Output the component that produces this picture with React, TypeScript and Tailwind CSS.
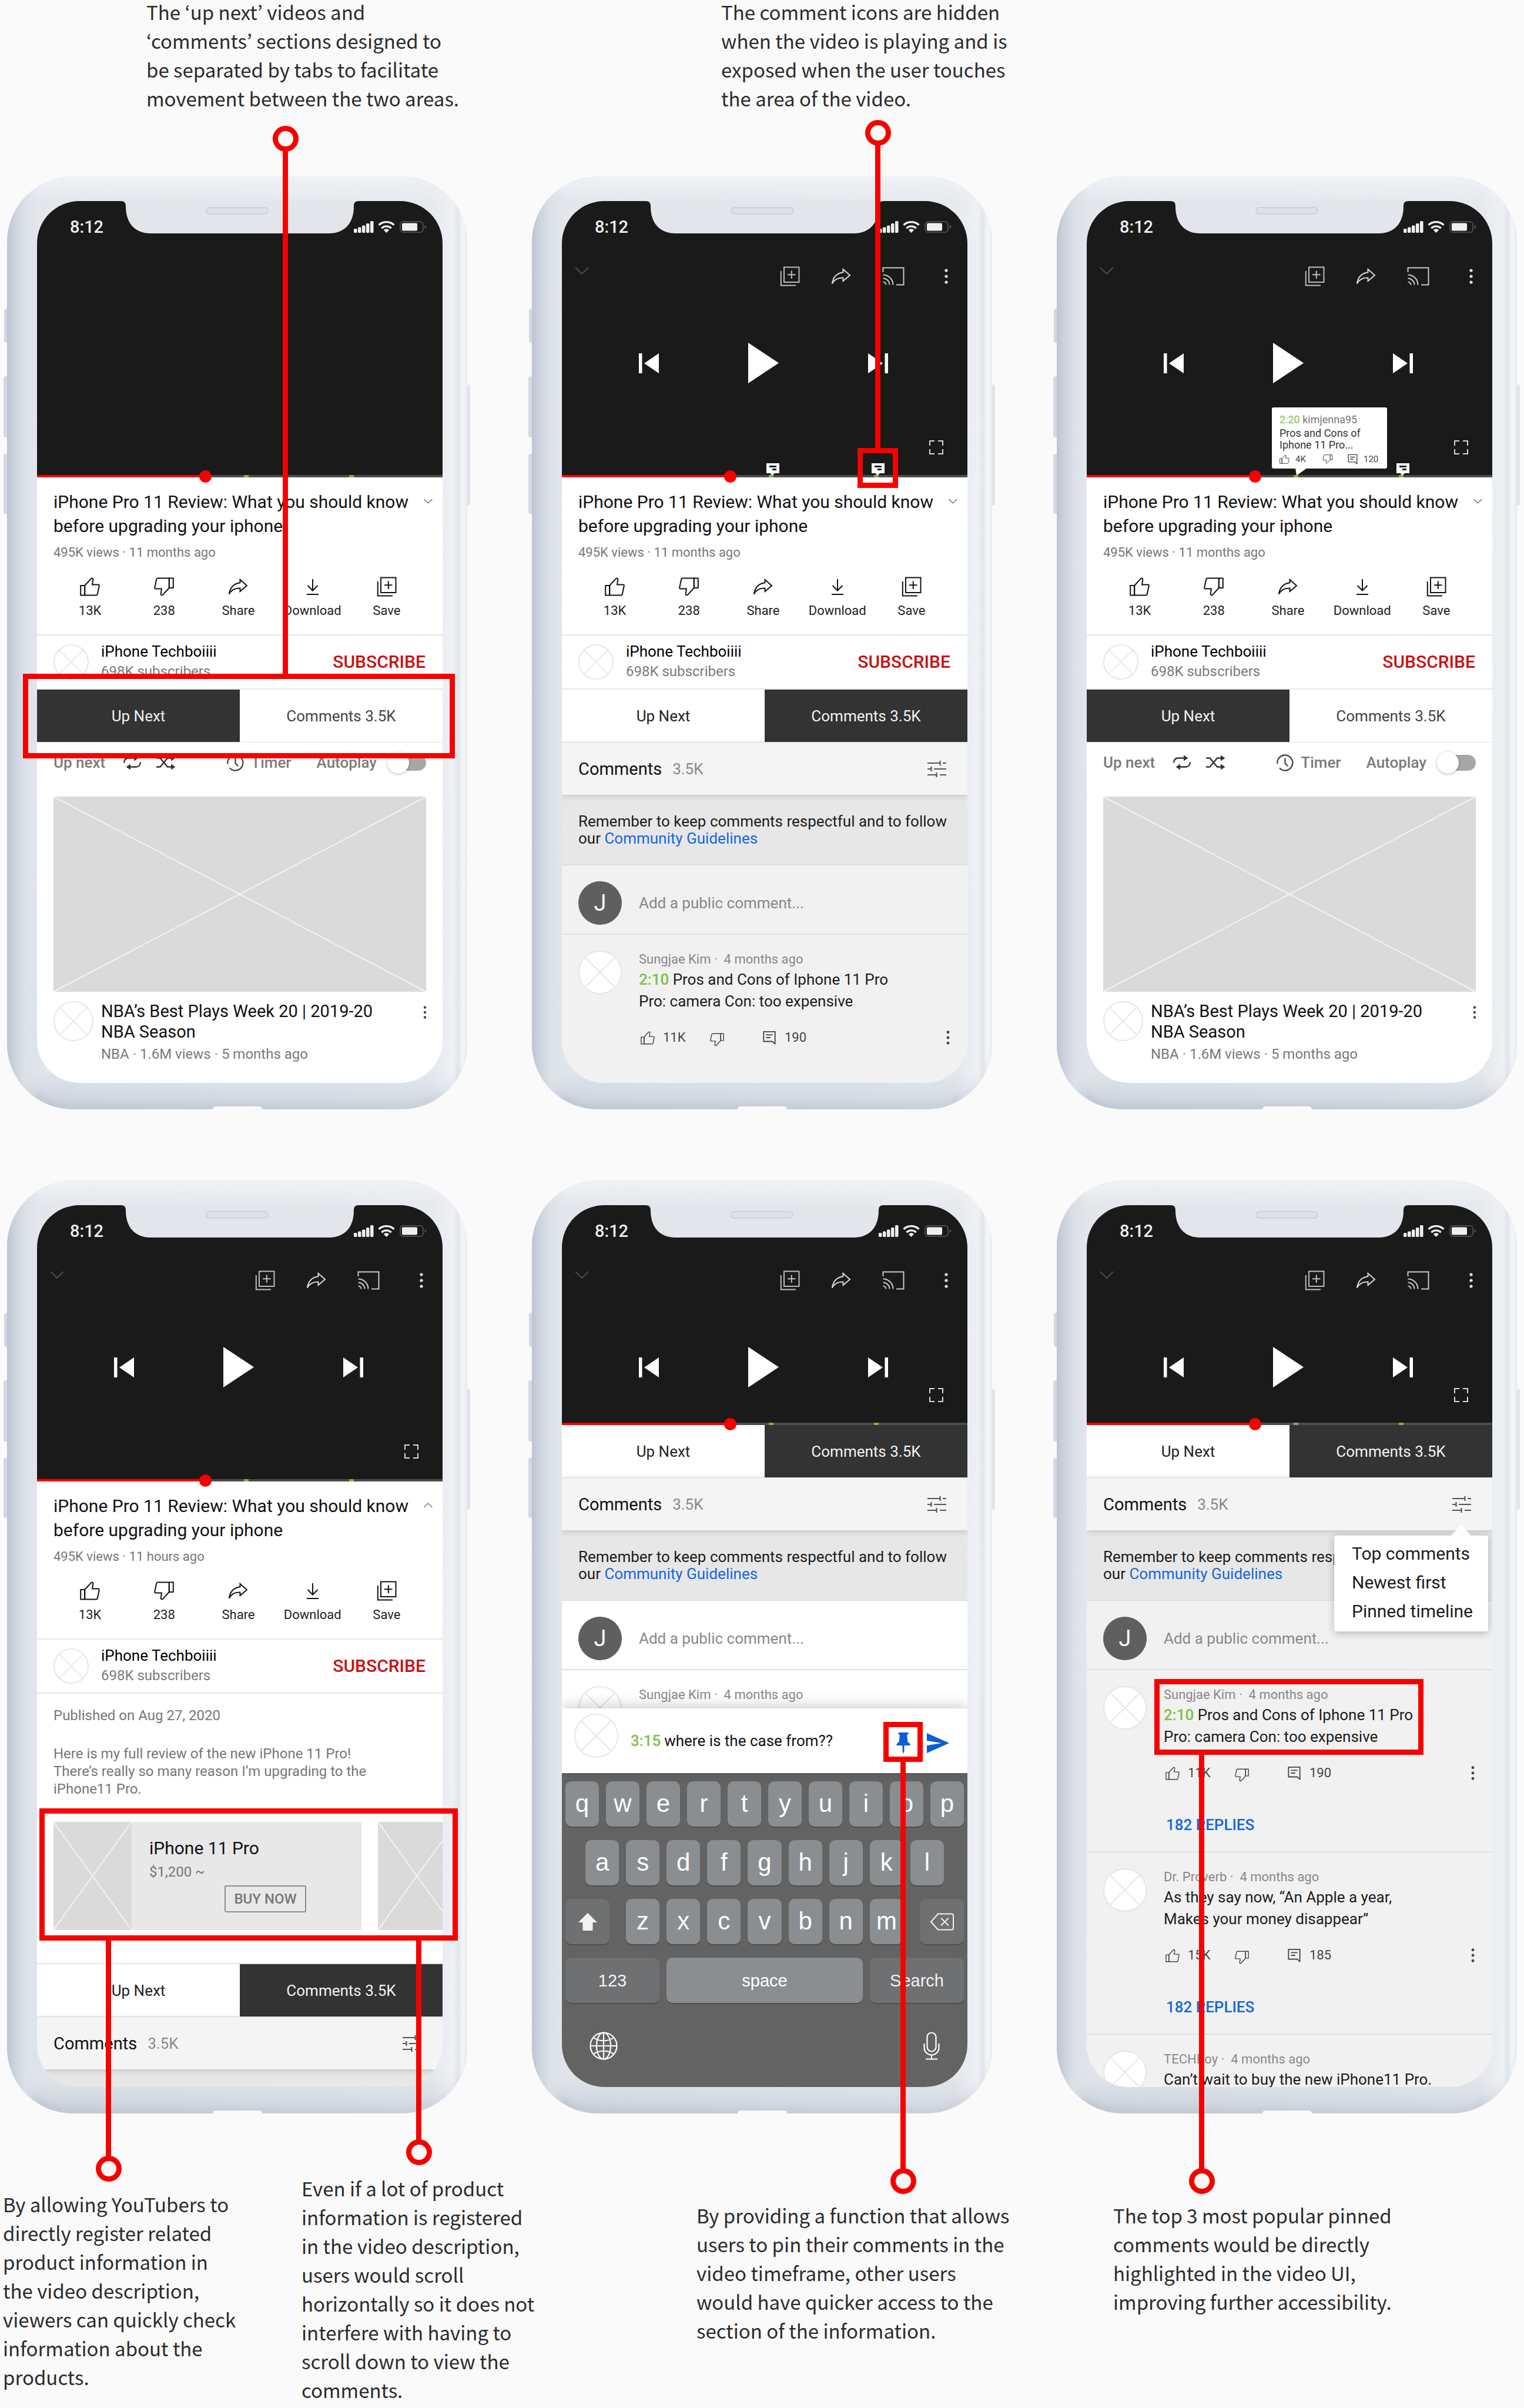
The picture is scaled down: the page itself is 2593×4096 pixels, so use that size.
import React from "react";

/* ---------------------------------- icons --------------------------------- */

type IconProps = { className?: string };

function ThumbUp({ className = "" }: IconProps) {
  return (
    <svg viewBox="0 0 34 32" fill="none" stroke="currentColor" strokeWidth="2" strokeLinejoin="round" className={className} aria-hidden="true">
      <path d="M1.2 14h7v16.6h-7z" />
      <path d="M8.2 14 18.6 2.6c1.6-1.8 4-1 3.7 1.5L21 12.6h10.4c1 0 1.6.8 1.4 1.8l-3 14.4c-.2 1-1 1.8-2.2 1.8H8.2z" />
    </svg>
  );
}

function ThumbDown({ className = "" }: IconProps) {
  return (
    <svg viewBox="0 0 34 32" fill="none" stroke="currentColor" strokeWidth="2" strokeLinejoin="round" className={className} aria-hidden="true">
      <path d="M25.8 1.4h7V18h-7z" />
      <path d="M25.8 18 15.4 29.4c-1.6 1.8-4 1-3.7-1.5l1.3-8.5H2.6c-1 0-1.6-.8-1.4-1.8l3-14.4c.2-1 1-1.8 2.2-1.8h19.4z" />
    </svg>
  );
}

function ShareArrow({ className = "" }: IconProps) {
  return (
    <svg viewBox="0 0 34 32" fill="none" stroke="currentColor" strokeWidth="2" strokeLinejoin="miter" className={className} aria-hidden="true">
      <path d="M20.5 4 32 14.2 20.5 24v-5.4C11.6 18.2 5.6 21.4 1.8 28.6 3.4 17.6 9.8 10.6 20.5 9.2z" />
    </svg>
  );
}

function DownloadIcon({ className = "" }: IconProps) {
  return (
    <svg viewBox="0 0 34 32" fill="none" stroke="currentColor" strokeWidth="2" className={className} aria-hidden="true">
      <path d="M17 3v19M8.5 14l8.5 8.5L25.5 14M7 29h20" />
    </svg>
  );
}

function SaveIcon({ className = "" }: IconProps) {
  return (
    <svg viewBox="0 0 34 34" fill="none" stroke="currentColor" strokeWidth="2" className={className} aria-hidden="true">
      <path d="M7 1.5h25.500V27H7zM19.800 7.500v13.500M13 14.200h13.500M1.800 8v24.500H27" />
    </svg>
  );
}

function CastIcon({ className = "" }: IconProps) {
  return (
    <svg viewBox="0 0 38 32" fill="none" stroke="currentColor" strokeWidth="2" className={className} aria-hidden="true">
      <path d="M1.5 9V1.5h35v29H24M1.5 13.5a17 17 0 0 1 17 17M1.5 19.500a11 11 0 0 1 11 11M1.500 25.500a5 5 0 0 1 5 5" />
    </svg>
  );
}

function Kebab({ className = "" }: IconProps) {
  return (
    <svg viewBox="0 0 6 26" fill="currentColor" className={className} aria-hidden="true">
      <circle cx="3" cy="3" r="2.6" />
      <circle cx="3" cy="13" r="2.6" />
      <circle cx="3" cy="23" r="2.6" />
    </svg>
  );
}

function Chevron({ className = "" }: IconProps) {
  return (
    <svg viewBox="0 0 24 13" fill="none" stroke="currentColor" strokeWidth="2" className={className} aria-hidden="true">
      <path d="m1 1 11 11L23 1" />
    </svg>
  );
}

function SkipPrev({ className = "" }: IconProps) {
  return (
    <svg viewBox="0 0 34 34" fill="currentColor" className={className} aria-hidden="true">
      <path d="M0 0h5.5v34H0zM34 0v34L9 17z" />
    </svg>
  );
}

function SkipNext({ className = "" }: IconProps) {
  return (
    <svg viewBox="0 0 34 34" fill="currentColor" className={className} aria-hidden="true">
      <path d="M28.5 0H34v34h-5.5zM0 0v34l25-17z" />
    </svg>
  );
}

function PlayIcon({ className = "" }: IconProps) {
  return (
    <svg viewBox="0 0 52 69" fill="currentColor" className={className} aria-hidden="true">
      <path d="M0 0v69l52-34.5z" />
    </svg>
  );
}

function FullscreenIcon({ className = "" }: IconProps) {
  return (
    <svg viewBox="0 0 24 24" fill="none" stroke="currentColor" strokeWidth="2" className={className} aria-hidden="true">
      <path d="M1 9V1h8M15 1h8v8M23 15v8h-8M9 23H1v-8" />
    </svg>
  );
}

function CommentIcon({ className = "" }: IconProps) {
  return (
    <svg viewBox="0 0 24 26" fill="none" stroke="currentColor" strokeWidth="2" strokeLinejoin="round" className={className} aria-hidden="true">
      <path d="M1.5 2h21v22.5L17.5 20h-16zM6 8h12M6 13h8" />
    </svg>
  );
}

function TuneIcon({ className = "" }: IconProps) {
  return (
    <svg viewBox="0 0 34 30" fill="none" stroke="currentColor" strokeWidth="2.2" className={className} aria-hidden="true">
      <path d="M1 5h21M27 5h6M22.5 1v8M1 15h6M12 15h21M7.5 11v8M1 25h15M22 25h11M16.5 21v8" />
    </svg>
  );
}

function RepeatIcon({ className = "" }: IconProps) {
  return (
    <svg viewBox="0 0 32 26" fill="none" stroke="currentColor" strokeWidth="2.4" className={className} aria-hidden="true">
      <path d="M2 13.5C2.5 7.5 5 5.5 9.5 5.5H20M30 12.5c-.5 6-3 8-7.5 8H12" />
      <path d="m19 .5 7.5 5-7.5 5zM13 15.500l-7.500 5 7.500 5z" fill="currentColor" stroke="none" />
    </svg>
  );
}

function ShuffleIcon({ className = "" }: IconProps) {
  return (
    <svg viewBox="0 0 34 26" fill="none" stroke="currentColor" strokeWidth="2.4" className={className} aria-hidden="true">
      <path d="M1 5.5h6.5L20 20.5h7M1 20.5h6.5L20 5.5h7" />
      <path d="m26 .5 7.5 5-7.5 5zM26 15.5l7.5 5-7.5 5z" fill="currentColor" stroke="none" />
    </svg>
  );
}

function TimerIcon({ className = "" }: IconProps) {
  return (
    <svg viewBox="0 0 30 30" fill="none" stroke="currentColor" strokeWidth="2.4" className={className} aria-hidden="true">
      <path d="M1.5 17A13.5 13.5 0 1 1 15 28.5c-4 0-7.5-1.8-9.8-4.5M15 7v9l5 5" />
    </svg>
  );
}

function PinIcon({ className = "" }: IconProps) {
  return (
    <svg viewBox="0 0 24 36" fill="currentColor" className={className} aria-hidden="true">
      <path d="M3.5 0h17v3.500h-2.500l1.500 13c2.500 1 4 2.600 4.300 5.500H13.500v10L12 36l-1.500-4V22H.2c.3-2.900 1.800-4.500 4.300-5.500l1.500-13H3.500z" />
    </svg>
  );
}

function SendIcon({ className = "" }: IconProps) {
  return (
    <svg viewBox="0 0 38 34" fill="currentColor" className={className} aria-hidden="true">
      <path d="M0 0 38 17 0 34V21l25-4L0 13z" />
    </svg>
  );
}

function ShiftIcon({ className = "" }: IconProps) {
  return (
    <svg viewBox="0 0 32 30" fill="currentColor" className={className} aria-hidden="true">
      <path d="M16 0 32 16h-7.500v13a1 1 0 0 1-1 1h-15a1 1 0 0 1-1-1V16H0z" />
    </svg>
  );
}

function BackspaceIcon({ className = "" }: IconProps) {
  return (
    <svg viewBox="0 0 40 30" fill="none" stroke="currentColor" strokeWidth="2" strokeLinejoin="round" className={className} aria-hidden="true">
      <path d="M13 1.5h23a3 3 0 0 1 3 3v21a3 3 0 0 1-3 3H13L1 15zM18 8.5l13 13M31 8.5l-13 13" />
    </svg>
  );
}

function GlobeIcon({ className = "" }: IconProps) {
  return (
    <svg viewBox="0 0 48 48" fill="none" stroke="currentColor" strokeWidth="2.2" className={className} aria-hidden="true">
      <circle cx="24" cy="24" r="22.5" />
      <ellipse cx="24" cy="24" rx="12" ry="22.5" />
      <path d="M24 1.5v45M1.5 24h45M7 10c9 7 25 7 34 0M7 38c9-7 25-7 34 0" />
    </svg>
  );
}

function MicIcon({ className = "" }: IconProps) {
  return (
    <svg viewBox="0 0 28 48" fill="none" stroke="currentColor" strokeWidth="2.2" className={className} aria-hidden="true">
      <rect x="6.5" y="1.5" width="15" height="32" rx="7.5" />
      <path d="M1.5 20v7a12.5 12.5 0 0 0 25 0v-7M14 39.5V46M4 46.5h20" />
    </svg>
  );
}

function StatusIcons() {
  return (
    <svg viewBox="0 0 125 20" className="h-5 w-[125px]" aria-hidden="true">
      <g fill="#efefef">
        <rect x="0" y="13" width="5.500" height="7" rx="1.500" />
        <rect x="7" y="10.500" width="5.500" height="9.500" rx="1.500" />
        <rect x="14" y="7.500" width="5.500" height="12.500" rx="1.500" />
        <rect x="21" y="4" width="5.500" height="16" rx="1.500" />
        <rect x="28" y="0" width="5.500" height="20" rx="1.500" />
        <path d="M55.500 20 50.800 15.200a6.800 6.800 0 0 1 9.400 0z" />
        <rect x="82" y="3.500" width="26" height="13" rx="2" />
      </g>
      <g fill="none" stroke="#efefef" strokeWidth="3.400">
        <path d="M47.300 12.200a11.800 11.800 0 0 1 16.400 0" />
        <path d="M42.500 6.800a19 19 0 0 1 26 0" />
      </g>
      <rect x="79" y="1" width="39" height="18" rx="5" fill="none" stroke="#4a4a4a" strokeWidth="2" />
      <path d="M120.500 7c2 .6 3 1.600 3 3s-1 2.400-3 3z" fill="#4a4a4a" />
    </svg>
  );
}

/* ------------------------------ device frame ------------------------------ */

function Notch() {
  return (
    <div className="absolute top-0 left-1/2 z-10 h-[56px] w-[406px] -translate-x-1/2">
      <svg viewBox="0 0 406 56" preserveAspectRatio="none" className="h-full w-full" aria-hidden="true">
        <path d="M0 0c7 0 9 3 9 9 0 30 17 46 42 46h304c25 0 42-16 42-46 0-6 2-9 9-9V-2H0z" fill="#e2e6eb" />
      </svg>
      <div className="absolute top-[10px] left-[145px] h-[13px] w-[107px] rounded-full border-2 border-[#ccd2db] bg-[#dde1e7]" />
    </div>
  );
}

function Phone({ children, overlay, label }: { children: React.ReactNode; overlay?: React.ReactNode; label: string }) {
  return (
    <section aria-label={label} className="relative">
      <div className="absolute top-[225px] -left-[5px] h-[58px] w-2 rounded-l bg-[#d3d9e2]" />
      <div className="absolute top-[340px] -left-[6px] h-[104px] w-2 rounded-l bg-[#d3d9e2]" />
      <div className="absolute top-[472px] -left-[6px] h-[102px] w-2 rounded-l bg-[#d3d9e2]" />
      <div className="absolute top-[354px] -right-[5px] h-[206px] w-2 rounded-r bg-[#e0e5eb]" />
      <div className="relative rounded-[112px] bg-[linear-gradient(180deg,#eef1f4_0px,#e3e7ec_44px,#e4e8ed_50%,#e0e5eb_96%,#c9d0da_100%)] shadow-[inset_0_-8px_12px_#bfc7d3,inset_0_3px_6px_#f3f5f7,inset_-3px_0_4px_#dfe4ea]">
        <div className="rounded-[112px] bg-[linear-gradient(90deg,#bcc4d2_0px,#cbd2dd_12px,#dce1e8_30px,rgba(226,230,236,0)_56px,rgba(240,243,245,0.2)_92%,rgba(240,243,246,0.8)_97%,rgba(225,230,235,0.8)_98%,rgba(250,251,252,0.8)_99%,rgba(250,251,252,0.5)_100%)] pt-[42px] pr-[42px] pb-[45px] pl-[51px]">
          <div className="relative flex aspect-[690/1500] flex-col overflow-hidden rounded-[72px] bg-white">
            <Notch />
            {children}
          </div>
        </div>
        <div className="absolute bottom-0 left-1/2 h-[5px] w-[84px] -translate-x-1/2 rounded-t-lg bg-[#fafafa]" />
      </div>
      {overlay}
    </section>
  );
}

/* ------------------------------ video section ----------------------------- */

function PinnedBubble() {
  return (
    <svg viewBox="0 0 22 24" className="h-6 w-[22px]" aria-hidden="true">
      <path d="M0 0h22v17h-8l-5 5-2-5H0z" fill="#fff" />
      <path d="M5 4h12v3H5zM10 9h7v3h-7z" fill="#1a1a1a" />
    </svg>
  );
}

function PinnedCard() {
  return (
    <div className="absolute bottom-[15px] left-[315px] z-10 w-[196px] rounded-[3px] bg-white px-[13px] pt-2 pb-[6px]">
      <p className="text-lg leading-[26px] whitespace-nowrap text-[#777]">
        <span className="text-[#7cc142]">2:20</span> kimjenna95
      </p>
      <p className="text-lg leading-5 text-[#333]">
        Pros and Cons of
        <br />
        Iphone 11 Pro...
      </p>
      <div className="mt-1 flex h-5 items-center text-[15px] leading-5 text-[#444]">
        <ThumbUp className="h-4 w-[17px]" />
        <span className="ml-[10px] w-[46px]">4K</span>
        <ThumbDown className="h-4 w-[18px]" />
        <CommentIcon className="ml-[25px] h-[18px] w-[17px]" />
        <span className="ml-[10px]">120</span>
      </div>
      <svg viewBox="0 0 20 13" className="absolute -bottom-3 left-[40px] h-[13px] w-5" aria-hidden="true">
        <path d="M0 0h20L2 13z" fill="#fff" />
      </svg>
    </div>
  );
}

function Video({
  compact = false,
  controls = true,
  pins = "none",
}: {
  compact?: boolean;
  controls?: boolean;
  pins?: "none" | "bubbles" | "card";
}) {
  return (
    <div className={`relative flex shrink-0 flex-col bg-[#1a1a1a] text-white ${compact ? "h-[374px]" : "h-[470px]"}`}>
      <div className="flex h-[88px] items-center justify-between pr-[26px] pl-[56px]">
        <span className="text-[29px] leading-8 font-medium text-[#efefef]">8:12</span>
        <StatusIcons />
      </div>
      {controls && (
        <>
          <div className="mt-[22px] flex h-9 items-center pr-[33px] pl-[22px]">
            <button aria-label="Minimise" className="-mt-5 text-[#4d4d4d]">
              <Chevron className="h-[13px] w-6" />
            </button>
            <button aria-label="Save" className="ml-auto text-[#bdbdbd]">
              <SaveIcon className="h-[34px] w-[34px]" />
            </button>
            <button aria-label="Share" className="ml-[53px] text-[#d8d8d8]">
              <ShareArrow className="h-8 w-[34px]" />
            </button>
            <button aria-label="Cast" className="ml-[53px] text-[#c8c8c8]">
              <CastIcon className="h-8 w-[38px]" />
            </button>
            <button aria-label="More" className="ml-[68px] text-[#e2e2e2]">
              <Kebab className="h-[26px] w-[6px]" />
            </button>
          </div>
          <div className="mt-[95px] flex items-center justify-between pr-[135px] pl-[131px]">
            <button aria-label="Previous">
              <SkipPrev className="h-[34px] w-[34px]" />
            </button>
            <button aria-label="Play">
              <PlayIcon className="h-[69px] w-[52px]" />
            </button>
            <button aria-label="Next">
              <SkipNext className="h-[34px] w-[34px]" />
            </button>
          </div>
          <button aria-label="Full screen" className="mt-auto mr-[41px] mb-[39px] self-end text-[#d8d8d8]">
            <FullscreenIcon className="h-6 w-6" />
          </button>
        </>
      )}
      <div className="absolute inset-x-0 bottom-0 z-20 h-1 bg-[#4c4c4c]">
        <div className="absolute top-0 left-[51%] h-1 w-2 bg-[#76b83f]" />
        <div className="absolute top-0 left-[77%] h-1 w-2 bg-[#76b83f]" />
        <div className="h-full w-[42%] bg-[#f60000]" />
        <div className="absolute -top-2 left-[40%] h-[21px] w-[21px] rounded-full bg-[#f60000]" />
        <input type="range" aria-label="Seek" defaultValue={42} className="absolute -top-2 left-0 h-5 w-full opacity-0" />
      </div>
      {pins === "bubbles" && (
        <div className="absolute bottom-0 left-[348px]">
          <PinnedBubble />
        </div>
      )}
      {pins === "card" && <PinnedCard />}
      {pins !== "none" && (
        <div className="absolute bottom-0 left-[527px]">
          <PinnedBubble />
        </div>
      )}
    </div>
  );
}

/* ------------------------------ shared blocks ----------------------------- */

function Placeholder({ className = "" }: { className?: string }) {
  return (
    <div className={`shrink-0 overflow-hidden rounded-full border-2 border-[#e6e6e6] bg-white ${className}`}>
      <svg viewBox="0 0 100 100" className="h-full w-full" fill="none" stroke="#e4e4e4" strokeWidth="2.5" aria-hidden="true">
        <path d="m14 14 72 72M86 14 14 86" />
      </svg>
    </div>
  );
}

function CrossBox({ className = "" }: { className?: string }) {
  return (
    <div className={`shrink-0 bg-[#dadada] ${className}`}>
      <svg viewBox="0 0 100 100" preserveAspectRatio="none" className="h-full w-full" fill="none" stroke="#f3f3f3" strokeWidth="2" aria-hidden="true">
        <path d="m0 0 100 100M100 0 0 100" vectorEffect="non-scaling-stroke" />
      </svg>
    </div>
  );
}

const actions = [
  { label: "13K", icon: <ThumbUp className="h-8 w-[34px]" /> },
  { label: "238", icon: <ThumbDown className="h-8 w-[34px]" /> },
  { label: "Share", icon: <ShareArrow className="h-8 w-[34px]" /> },
  { label: "Download", icon: <DownloadIcon className="h-8 w-[34px]" /> },
  { label: "Save", icon: <SaveIcon className="h-[34px] w-[34px]" /> },
];

function Details({ age, open = false }: { age: string; open?: boolean }) {
  return (
    <div className="shrink-0 border-b-2 border-[#e6e6e6] bg-white pt-[21px] pb-[27px]">
      <div className="flex items-start justify-between pr-[17px] pl-7">
        <h2 className="text-[30px] leading-[41px] text-[#111]">
          iPhone Pro 11 Review: What you should know
          <br />
          before upgrading your iphone
        </h2>
        <button aria-label={open ? "Collapse" : "Expand"} className="mt-[15px] shrink-0 text-[#666]">
          <Chevron className={open ? "h-[9px] w-[15px] rotate-180" : "h-[9px] w-[15px]"} />
        </button>
      </div>
      <p className="mt-3 pl-7 text-[22px] leading-[26px] text-[#777]">495K views · {age} ago</p>
      <div className="mt-7 grid grid-cols-5 pr-8 pl-[27px]">
        {actions.map((a) => (
          <button key={a.label} className="flex flex-col items-center text-[#111]">
            <span className="flex h-[34px] items-center">{a.icon}</span>
            <span className="mt-[11px] text-[22px] leading-[26px] text-[#222]">{a.label}</span>
          </button>
        ))}
      </div>
    </div>
  );
}

function Channel() {
  return (
    <div className="flex h-[92px] shrink-0 items-center border-b-2 border-[#e6e6e6] bg-white pr-[29px] pl-7">
      <Placeholder className="h-[60px] w-[60px]" />
      <div className="ml-[21px] pb-[2px]">
        <p className="text-[26px] leading-[34px] text-black">iPhone Techboiiii</p>
        <p className="text-2xl leading-[34px] text-[#7a7a7a]">698K subscribers</p>
      </div>
      <button className="ml-auto text-[30px] leading-9 font-medium text-[#cc0f0f]">SUBSCRIBE</button>
    </div>
  );
}

function Tabs({ active }: { active: "next" | "comments" }) {
  const on = "bg-[#333] text-[#f2f2f2]";
  return (
    <div role="tablist" className="grid h-[90px] shrink-0 grid-cols-2 border-b border-[#e2e2e2] bg-white text-[26px] leading-8">
      <button role="tab" aria-selected={active === "next"} className={active === "next" ? on : "text-[#222]"}>
        Up Next
      </button>
      <button role="tab" aria-selected={active === "comments"} className={active === "comments" ? on : "text-[#444]"}>
        Comments 3.5K
      </button>
    </div>
  );
}

function UpNext() {
  return (
    <>
      <div className="flex h-[68px] shrink-0 items-center pr-7 pl-7 text-[26px] leading-8 font-medium text-[#7b7b7b]">
        <span>Up next</span>
        <button aria-label="Repeat" className="ml-[30px] text-[#333]">
          <RepeatIcon className="h-[26px] w-8" />
        </button>
        <button aria-label="Shuffle" className="ml-6 text-[#333]">
          <ShuffleIcon className="h-[26px] w-[34px]" />
        </button>
        <button className="ml-auto flex items-center gap-3">
          <TimerIcon className="h-[29px] w-[29px] text-[#444]" />
          Timer
        </button>
        <label className="ml-[43px] flex items-center gap-[18px]">
          Autoplay
          <span className="relative block h-[37px] w-[66px]">
            <input type="checkbox" role="switch" className="absolute inset-0 z-10 h-full w-full opacity-0" />
            <span className="absolute top-[5px] right-0 h-[27px] w-[60px] rounded-full bg-[#a6a6a6]" />
            <span className="absolute top-0 left-0 h-[37px] w-[37px] rounded-full bg-white shadow-[0_1px_4px_rgba(0,0,0,0.3)]" />
          </span>
        </label>
      </div>
      <CrossBox className="mx-7 mt-6 h-[332px]" />
      <div className="flex items-start pt-4 pr-[27px] pl-7">
        <Placeholder className="h-[68px] w-[68px]" />
        <div className="ml-[13px]">
          <h3 className="text-[29px] leading-[35px] text-[#111]">
            NBA’s Best Plays Week 20 | 2019-20
            <br />
            NBA Season
          </h3>
          <p className="mt-[5px] text-2xl leading-[30px] text-[#7a7a7a]">NBA · 1.6M views · 5 months ago</p>
        </div>
        <button aria-label="More" className="mt-2 ml-auto text-[#444]">
          <Kebab className="h-[22px] w-[6px]" />
        </button>
      </div>
    </>
  );
}

function CommentsHeader() {
  return (
    <div className="relative z-10 flex h-[89px] shrink-0 items-center bg-[#f4f4f4] pr-[35px] pl-7 shadow-[0_2px_10px_rgba(0,0,0,0.16)]">
      <h3 className="text-[29px] leading-9 text-[#111]">Comments</h3>
      <span className="ml-[18px] text-[26px] leading-9 text-[#888]">3.5K</span>
      <button aria-label="Sort comments" className="ml-auto text-[#555]">
        <TuneIcon className="h-[30px] w-[34px]" />
      </button>
    </div>
  );
}

function Reminder() {
  return (
    <p className="shrink-0 border-b-2 border-[#dfdfdf] bg-[#e7e7e7] pt-[31px] pb-[29px] pl-7 text-[26px] leading-[29px] whitespace-nowrap text-[#1c1c1c]">
      Remember to keep comments respectful and to follow
      <br />
      our{" "}
      <a href="#guidelines" className="text-[#1467de]">
        Community Guidelines
      </a>
    </p>
  );
}

function AddComment({ white = false }: { white?: boolean }) {
  return (
    <div className={`flex shrink-0 items-center border-b-2 border-[#e0e0e0] pt-[27px] pb-[15px] pl-7 ${white ? "bg-white" : "bg-[#f1f1f1]"}`}>
      <div className="flex h-[74px] w-[74px] shrink-0 items-center justify-center rounded-full bg-[#5f5f5f] text-[38px] leading-10 text-white">J</div>
      <input aria-label="Add a public comment" placeholder="Add a public comment..." className="ml-[29px] w-[420px] bg-transparent text-[26px] leading-8 outline-none placeholder:text-[#888]" />
    </div>
  );
}

type CommentData = {
  author: string;
  time?: string;
  lines: string[];
  likes: string;
  replies: string;
  thread?: string;
};

const topComment: CommentData = {
  author: "Sungjae Kim",
  time: "2:10",
  lines: ["Pros and Cons of Iphone 11 Pro", "Pro: camera Con: too expensive"],
  likes: "11K",
  replies: "190",
};

function Comment({ data }: { data: CommentData }) {
  return (
    <article className={`flex shrink-0 pt-[27px] pr-[30px] pb-[30px] pl-7 ${data.thread ? "border-b-2 border-[#e0e0e0]" : ""}`}>
      <Placeholder className="h-[74px] w-[74px]" />
      <div className="ml-[29px] flex-1 pt-[2px]">
        <p className="text-[22px] leading-[26px] text-[#888]">{data.author} ·&nbsp; 4 months ago</p>
        <p className="mt-[3px] text-[26px] leading-[37px] whitespace-nowrap text-[#1c1c1c]">
          {data.time && <span className="font-medium text-[#7cc142]">{data.time} </span>}
          {data.lines[0]}
          <br />
          {data.lines[1]}
        </p>
        <div className="mt-[30px] flex h-[26px] items-center pl-[3px] text-[22px] leading-[26px] text-[#444]">
          <button className="flex w-[118px] items-center gap-[14px]">
            <ThumbUp className="h-[23px] w-6" />
            {data.likes}
          </button>
          <button aria-label="Dislike" className="w-[89px] pt-[6px]">
            <ThumbDown className="h-[23px] w-6" />
          </button>
          <button className="flex items-center gap-[14px]">
            <CommentIcon className="h-6 w-6" />
            {data.replies}
          </button>
          <button aria-label="More" className="ml-auto">
            <Kebab className="h-6 w-[6px]" />
          </button>
        </div>
        {data.thread && (
          <button className="mt-[60px] block pl-1 text-[26px] leading-[30px] font-medium text-[#1467de]">{data.thread}</button>
        )}
      </div>
    </article>
  );
}

/* ------------------------------ row 2 content ----------------------------- */

function Description() {
  return (
    <div className="shrink-0 border-b-2 border-[#e6e6e6] bg-white pt-[22px] pb-[56px] text-2xl leading-[30px] text-[#777]">
      <p className="pl-7">Published on Aug 27, 2020</p>
      <p className="mt-[35px] pl-7">
        Here is my full review of the new iPhone 11 Pro!
        <br />
        There’s really so many reason I’m upgrading to the
        <br />
        iPhone11 Pro.
      </p>
      <div className="mt-[41px] flex gap-7 overflow-hidden pl-7">
        <div className="flex h-[184px] w-[524px] shrink-0 bg-[#e8e8e8]">
          <CrossBox className="w-[133px]" />
          <div className="flex-1 pt-[26px] pl-[30px]">
            <h3 className="text-[30px] leading-[38px] text-[#111]">iPhone 11 Pro</h3>
            <p className="mt-[6px]">$1,200 ~</p>
            <button className="mt-2 ml-[128px] h-[46px] w-[139px] rounded-[3px] border-2 border-[#8e8e8e] font-medium text-[#777]">BUY NOW</button>
          </div>
        </div>
        <CrossBox className="h-[184px] w-[133px]" />
      </div>
    </div>
  );
}

const keyClass =
  "flex h-[77px] items-center justify-center rounded-[10px] bg-[#8a8e90] font-['Liberation_Sans',sans-serif] text-[42px] leading-[50px] text-white shadow-[0_2px_0_#4f4f4f]";
const darkKey =
  "flex h-[77px] items-center justify-center rounded-[10px] bg-[#6f7072] font-['Liberation_Sans',sans-serif] text-[29px] leading-9 text-[#f2f2f2] shadow-[0_2px_0_#505050]";

function Keys({ letters }: { letters: string }) {
  return (
    <div className="flex flex-1 gap-3">
      {letters.split("").map((l) => (
        <button key={l} className={`${keyClass} flex-1 pb-[2px]`}>
          {l}
        </button>
      ))}
    </div>
  );
}

function Keyboard() {
  return (
    <div className="flex flex-1 flex-col gap-[23px] bg-[#636363] pt-[14px]">
      <div className="flex px-[6px]">
        <Keys letters="qwertyuiop" />
      </div>
      <div className="flex px-[40px]">
        <Keys letters="asdfghjkl" />
      </div>
      <div className="flex gap-[28px] px-[6px]">
        <button aria-label="Shift" className={`${darkKey} w-[75px]`}>
          <ShiftIcon className="h-[30px] w-8" />
        </button>
        <Keys letters="zxcvbnm" />
        <button aria-label="Backspace" className={`${darkKey} w-[75px]`}>
          <BackspaceIcon className="h-[30px] w-10" />
        </button>
      </div>
      <div className="flex gap-3 px-[6px]">
        <button className={`${darkKey} w-[160px]`}>123</button>
        <button className={`${keyClass} flex-1`}>
          <span className="text-[29px] leading-9">space</span>
        </button>
        <button className={`${darkKey} w-[160px]`}>Search</button>
      </div>
      <div className="mt-[26px] flex items-center justify-between px-[47px] text-white">
        <button aria-label="Change keyboard">
          <GlobeIcon className="h-12 w-12" />
        </button>
        <button aria-label="Dictate">
          <MicIcon className="h-12 w-7" />
        </button>
      </div>
    </div>
  );
}

function Composer() {
  return (
    <div className="relative z-10 flex h-[110px] shrink-0 items-center bg-white pr-[31px] pl-[21px] shadow-[0_-4px_22px_rgba(0,0,0,0.2)]">
      <Placeholder className="mt-[9px] h-[75px] w-[75px] self-start" />
      <label className="ml-[21px] flex flex-1 items-center text-[26px] leading-8 text-[#111]">
        <span className="mr-[6px] font-medium text-[#7cc142]">3:15</span>
        <input aria-label="Your comment" defaultValue="where is the case from??" className="min-w-0 flex-1 bg-transparent outline-none" />
      </label>
      <button aria-label="Pin to timeline" className="mt-[7px] text-[#0b5cda]">
        <PinIcon className="h-9 w-6" />
      </button>
      <button aria-label="Send" className="mt-[7px] ml-[28px] text-[#0b5cda]">
        <SendIcon className="h-[34px] w-[38px]" />
      </button>
    </div>
  );
}

function SortMenu() {
  return (
    <div role="menu" className="absolute top-[562px] right-[7px] z-20 flex w-[262px] flex-col items-start rounded bg-white pt-[6px] pb-[10px] pl-[30px] text-[30px] leading-[49px] text-[#1c1c1c] shadow-[0_3px_14px_rgba(0,0,0,0.25)]">
      <svg viewBox="0 0 36 19" className="absolute -top-[18px] right-[28px] h-[19px] w-9" aria-hidden="true">
        <path d="M0 19 18 0l18 19z" fill="#fff" />
      </svg>
      <button role="menuitem">Top comments</button>
      <button role="menuitem">Newest first</button>
      <button role="menuitem">Pinned timeline</button>
    </div>
  );
}

/* ------------------------------- annotations ------------------------------ */

function Box({ className }: { className: string }) {
  return <div className={`pointer-events-none absolute z-30 border-[9px] border-[#f60000] ${className}`} />;
}

function Line({ className }: { className: string }) {
  return <div className={`pointer-events-none absolute z-30 w-[9px] bg-[#f60000] ${className}`} />;
}

function Ring({ className }: { className: string }) {
  return <div className={`pointer-events-none absolute z-30 h-11 w-11 rounded-full border-[9px] border-[#f60000] bg-[#fafafa] ${className}`} />;
}

function Caption({ lines, className = "" }: { lines: string[]; className?: string }) {
  return (
    <p className={`font-['Noto_Sans_CJK_KR','Noto_Sans_CJK_SC',sans-serif] text-[33px] leading-[49px] whitespace-nowrap text-[#2b2b2b] ${className}`}>
      {lines.map((l) => (
        <span key={l} className="block">
          {l}
        </span>
      ))}
    </p>
  );
}

export default function App() {
  return (
    <main className="min-h-[4096px] overflow-hidden bg-[#fafafa] font-['Roboto',sans-serif]">
      <div className="grid grid-cols-3 gap-x-[110px] px-3 pb-[108px]">
        <Caption
          className="-mt-1 pl-[237px]"
          lines={["The ‘up next’ videos and", "‘comments’ sections designed to", "be separated by tabs to facilitate", "movement between the two areas."]}
        />
        <Caption
          className="-mt-1 pl-[322px]"
          lines={["The comment icons are hidden", "when the video is playing and is", "exposed when the user touches", "the area of the video."]}
        />
      </div>

      <div className="grid grid-cols-3 gap-x-[110px] gap-y-[121px] px-3">
        <Phone
          label="Video playing, up next tab"
          overlay={
            <>
              <Line className="-top-[46px] left-[469px] h-[896px]" />
              <Ring className="-top-[86px] left-[452px]" />
              <Box className="top-[846px] left-[27px] h-[144px] w-[735px]" />
            </>
          }
        >
          <Video controls={false} />
          <Details age="11 months" />
          <Channel />
          <Tabs active="next" />
          <UpNext />
        </Phone>

        <Phone
          label="Video touched, comments tab"
          overlay={
            <>
              <Line className="-top-[56px] left-[584px] h-[520px]" />
              <Ring className="-top-[96px] left-[567px]" />
              <Box className="top-[462px] left-[554px] h-[68px] w-[69px]" />
            </>
          }
        >
          <Video pins="bubbles" />
          <Details age="11 months" />
          <Channel />
          <Tabs active="comments" />
          <CommentsHeader />
          <Reminder />
          <AddComment />
          <div className="flex-1 bg-[#f1f1f1]">
            <Comment data={topComment} />
          </div>
        </Phone>

        <Phone label="Pinned comment preview">
          <Video pins="card" />
          <Details age="11 months" />
          <Channel />
          <Tabs active="next" />
          <UpNext />
        </Phone>

        <Phone
          label="Expanded description"
          overlay={
            <>
              <Box className="top-[1068px] left-[55px] h-[225px] w-[712px]" />
              <Line className="top-[1290px] left-[168px] h-[374px]" />
              <Ring className="top-[1659px] left-[151px]" />
              <Line className="top-[1290px] left-[696px] h-[346px]" />
              <Ring className="top-[1631px] left-[679px]" />
            </>
          }
        >
          <Video />
          <Details age="11 hours" open />
          <Channel />
          <Description />
          <Tabs active="comments" />
          <CommentsHeader />
          <Reminder />
        </Phone>

        <Phone
          label="Writing a pinned comment"
          overlay={
            <>
              <Box className="top-[921px] left-[598px] h-[68px] w-[67px]" />
              <Line className="top-[985px] left-[627px] h-[700px]" />
              <Ring className="top-[1680px] left-[610px]" />
            </>
          }
        >
          <Video compact />
          <Tabs active="comments" />
          <CommentsHeader />
          <Reminder />
          <AddComment white />
          <div className="h-[65px] shrink-0 overflow-hidden bg-white">
            <Comment data={topComment} />
          </div>
          <Composer />
          <Keyboard />
        </Phone>

        <Phone
          label="Sorting comments"
          overlay={
            <>
              <Box className="top-[848px] left-[166px] h-[129px] w-[458px]" />
              <Line className="top-[970px] left-[242px] h-[715px]" />
              <Ring className="top-[1680px] left-[225px]" />
            </>
          }
        >
          <Video compact />
          <Tabs active="comments" />
          <CommentsHeader />
          <Reminder />
          <AddComment />
          <div className="flex min-h-0 flex-1 flex-col bg-[#f1f1f1]">
            <Comment data={{ ...topComment, thread: "182 REPLIES" }} />
            <Comment
              data={{
                author: "Dr. Proverb",
                lines: ["As they say now, “An Apple a year,", "Makes your money disappear”"],
                likes: "15K",
                replies: "185",
                thread: "182 REPLIES",
              }}
            />
            <Comment data={{ author: "TECHBoy", lines: ["Can’t wait to buy the new iPhone11 Pro.", ""], likes: "9K", replies: "120" }} />
          </div>
          <SortMenu />
        </Phone>
      </div>

      <div className="flex items-start">
        <div className="w-[513px] shrink-0 pt-[130px] pl-[5px]">
          <Caption
            lines={[
              "By allowing YouTubers to",
              "directly register related",
              "product information in",
              "the video description,",
              "viewers can quickly check",
              "information about the",
              "products.",
            ]}
          />
        </div>
        <div className="w-[672px] shrink-0 pt-[103px]">
          <Caption
            lines={[
              "Even if a lot of product",
              "information is registered",
              "in the video description,",
              "users would scroll",
              "horizontally so it does not",
              "interfere with having to",
              "scroll down to view the",
              "comments.",
            ]}
          />
        </div>
        <div className="w-[709px] shrink-0 pt-[149px]">
          <Caption
            lines={[
              "By providing a function that allows",
              "users to pin their comments in the",
              "video timeframe, other users",
              "would have quicker access to the",
              "section of the information.",
            ]}
          />
        </div>
        <div className="pt-[149px]">
          <Caption
            lines={["The top 3 most popular pinned", "comments would be directly", "highlighted in the video UI,", "improving further accessibility."]}
          />
        </div>
      </div>
    </main>
  );
}
